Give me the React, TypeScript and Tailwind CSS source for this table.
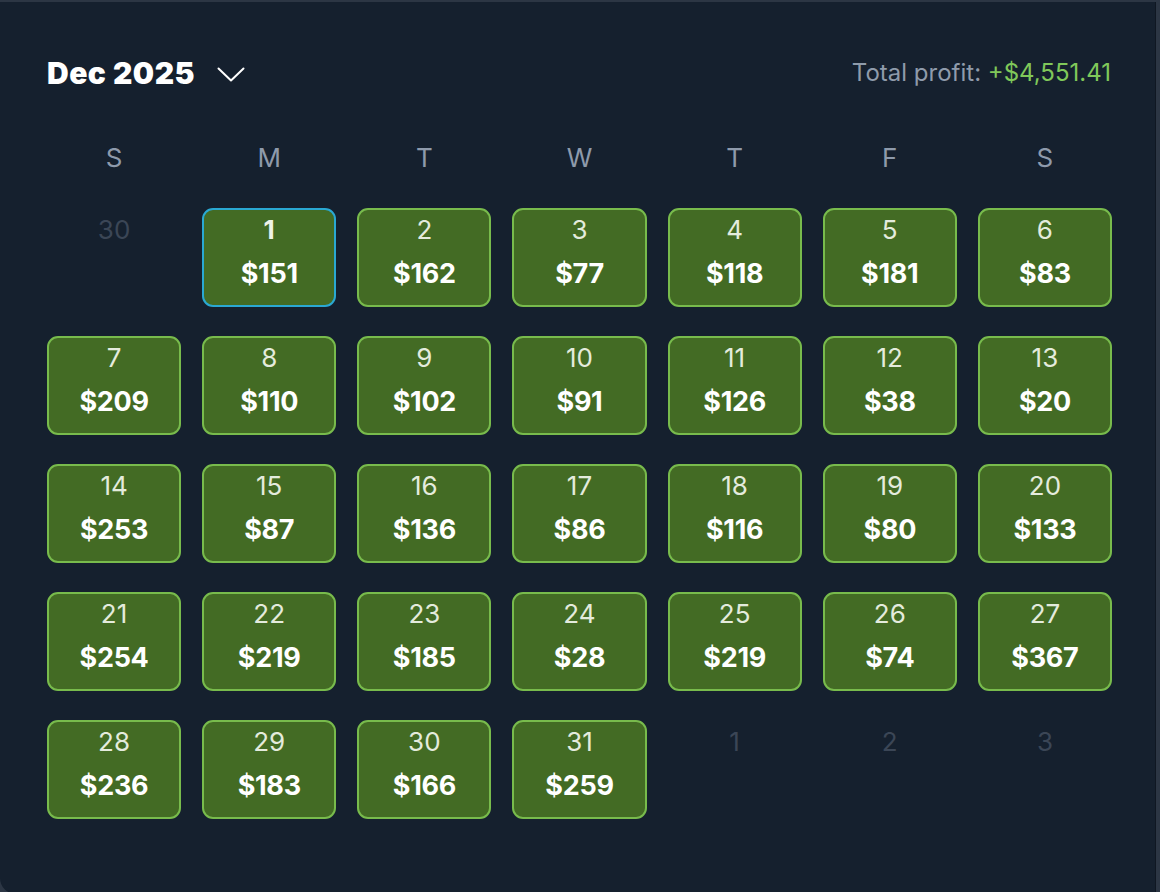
import React from "react"

const amounts = [151, 162, 77, 118, 181, 83, 209, 110, 102, 91, 126, 38, 20, 253, 87, 136, 86, 116, 80, 133, 254, 219, 185, 28, 219, 74, 367, 236, 183, 166, 259]

const weekdays = ["S", "M", "T", "W", "T", "F", "S"]

type Cell = { day: number; amount?: number; muted?: boolean }

function buildCells(): Cell[] {
  const cells: Cell[] = [{ day: 30, muted: true }]
  amounts.forEach((a, i) => cells.push({ day: i + 1, amount: a }))
  ;[1, 2, 3].forEach((d) => cells.push({ day: d, muted: true }))
  return cells
}

export default function App() {
  const cells = buildCells()

  return (
    <div className="w-[1160px] h-[892px] bg-[#2c3644] overflow-hidden" style={{ fontFamily: "Inter, 'Noto Sans', sans-serif" }}>
      <div className="mt-[2px] mr-[4px] h-[892px] bg-[#15202e] rounded-bl-2xl pl-[47px] pr-[43px] pt-[54px] border-r border-[#0f1722]">
        <div className="h-[34px] flex items-center justify-between">
          <div className="flex items-center gap-[22px]">
            <span className="text-[30px] font-black text-white leading-[34px] tracking-[0.5px]">Dec 2025</span>
            <svg width="28" height="15" viewBox="0 0 28 15" fill="none" className="mt-[2px]">
              <polyline points="1.5,1.5 14,13.5 26.5,1.5" stroke="white" strokeWidth="2" strokeLinecap="round" strokeLinejoin="round" />
            </svg>
          </div>
          <div className="text-[24px] leading-[30px] mr-[1px]">
            <span className="text-[#8f9bab]">Total profit: </span>
            <span className="text-[#80c85a]">+$4,551.41</span>
          </div>
        </div>

        <div className="mt-[48px] grid grid-cols-7 gap-x-[21px] h-[30px]">
          {weekdays.map((w, i) => (
            <div key={i} className="flex items-center justify-center text-[26px] text-[#8e9aab]">{w}</div>
          ))}
        </div>

        <div className="mt-[40px] grid grid-cols-7 gap-x-[21px] gap-y-[29px]">
          {cells.map((c, i) => {
            if (c.muted) {
              return (
                <div key={i} className="h-[99px] flex flex-col items-center pt-[7px]">
                  <span className="text-[26px] leading-[30px] text-[#3b4656]">{c.day}</span>
                </div>
              )
            }
            const selected = c.day === 1
            return (
              <div
                key={i}
                className={
                  selected
                    ? "h-[99px] rounded-[11px] border-2 border-[#2aa8d2] bg-[#436b24] flex flex-col items-center pt-[5px]"
                    : "h-[99px] rounded-[11px] border-2 border-[#78bb4c] bg-[#436b24] flex flex-col items-center pt-[5px]"
                }
              >
                <span className={selected ? "text-[26px] leading-[30px] font-bold text-[#eef2e8]" : "text-[26px] leading-[30px] text-[#e4ebdd]"}>{c.day}</span>
                <span className="mt-[13px] text-[27px] leading-[32px] font-bold text-white tracking-[-0.3px]">${c.amount}</span>
              </div>
            )
          })}
        </div>
      </div>
    </div>
  )
}
